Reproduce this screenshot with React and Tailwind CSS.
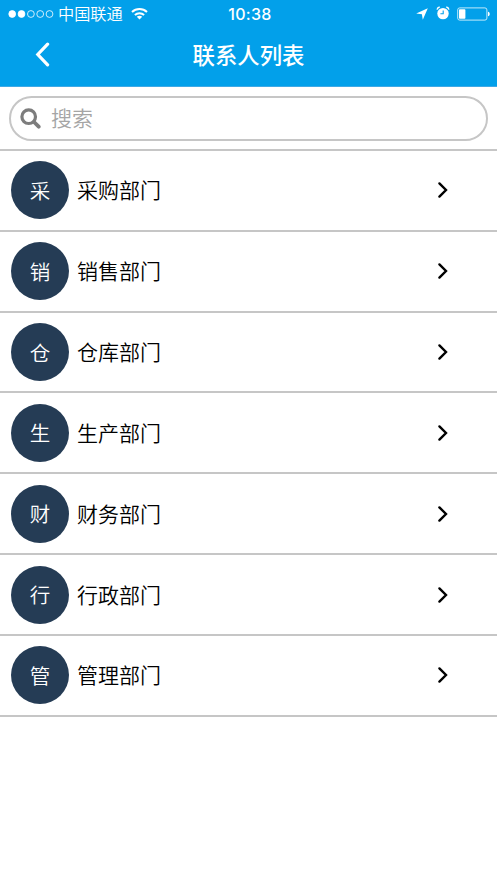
import React from 'react';

const departments = [
    { id: 1, badge: '采', name: '采购部门' },
    { id: 2, badge: '销', name: '销售部门' },
    { id: 3, badge: '仓', name: '仓库部门' },
    { id: 4, badge: '生', name: '生产部门' },
    { id: 5, badge: '财', name: '财务部门' },
    { id: 6, badge: '行', name: '行政部门' },
    { id: 7, badge: '管', name: '管理部门' },
];

function StatusBar() {
    return (
        <div className="grid h-[27px] grid-cols-[1fr_auto_1fr] items-center pl-[8px] pr-[7px]">
            <div className="flex items-center">
                <svg width="46" height="10" viewBox="0 0 46 10" fill="none" stroke="white" strokeWidth="0.8">
                    <circle cx="4.2" cy="5" r="3.4" fill="white" />
                    <circle cx="13.5" cy="5" r="3.4" fill="white" />
                    <circle cx="22.9" cy="5" r="3.4" />
                    <circle cx="32.2" cy="5" r="3.4" />
                    <circle cx="41.5" cy="5" r="3.4" />
                </svg>
                <span className="ml-[4px] text-[16.2px] leading-[27px] font-[350] whitespace-nowrap">中国联通</span>
                <svg className="ml-[8px] -mt-px" width="17" height="13" viewBox="0 0 17 13" fill="none" stroke="white" strokeWidth="2">
                    <path d="M1 5C5.2 1 11.8 1 16 5" />
                    <path d="M3.9 8C6.5 5.5 10.5 5.5 13.1 8" />
                    <path d="M8.5 12.6L5.8 9.8C7.3 8.5 9.7 8.5 11.2 9.8Z" fill="white" stroke="none" />
                </svg>
            </div>
            <span className="mt-px ml-[2px] font-['Inter','Noto_Sans_CJK_SC',sans-serif] text-[16px] font-medium tracking-[0.3px]">10:38</span>
            <div className="flex items-center justify-end">
                <svg width="12" height="12" viewBox="0 0 12 12" fill="white">
                    <path d="M11.8 0.2L6.8 11.8L5.9 6.3L0.2 5.6Z" />
                </svg>
                <svg className="ml-[8px] -mt-px" width="14" height="14" viewBox="0 0 14 14" fill="none" stroke="white">
                    <circle cx="7" cy="7.6" r="5.7" fill="white" stroke="none" />
                    <path d="M1 3.7C1.3 2.3 2.3 1.3 3.7 1M13 3.7C12.7 2.3 11.7 1.3 10.3 1" strokeWidth="1.3" />
                    <path d="M7.2 4.4V7.8H4.4" stroke="#02a0ea" strokeWidth="1.1" />
                </svg>
                <svg className="ml-[7px]" width="33" height="14" viewBox="0 0 33 14" fill="none">
                    <rect x="0.7" y="0.9" width="29.2" height="12.2" rx="2" stroke="#d8f2fd" strokeWidth="0.9" />
                    <rect x="2" y="2.2" width="6.4" height="9.6" rx="0.8" fill="white" />
                    <path d="M31 4.8C33.3 5.2 33.3 8.8 31 9.2Z" fill="white" />
                </svg>
            </div>
        </div>
    );
}

function Header() {
    return (
        <header className="h-[87px] border-b border-[#3fa9e5] bg-[#02a0ea] text-white">
            <StatusBar />
            <div className="grid h-[56px] grid-cols-[84px_1fr_84px] items-center">
                <button type="button" aria-label="返回" className="pb-px pl-[35px]">
                    <svg width="15" height="25" viewBox="0 0 15 25" fill="none" stroke="white" strokeWidth="3.2" strokeLinecap="round" strokeLinejoin="miter">
                        <path d="M12.6 2.2L2.8 12.5L12.6 22.8" />
                    </svg>
                </button>
                <h1 className="pb-[3px] text-center text-[22.4px] leading-[32px] font-medium">联系人列表</h1>
            </div>
        </header>
    );
}

function SearchBar() {
    return (
        <div className="h-[62px] px-[9px] pt-[9px]">
            <label className="flex h-[45px] items-center rounded-full border-2 border-[#c6c6c6] pl-[9px]">
                <svg className="-mt-px shrink-0" width="21" height="21" viewBox="0 0 21 21" fill="none" stroke="#7d7d7d" strokeLinecap="round">
                    <circle cx="8.7" cy="8.7" r="6.8" strokeWidth="3.2" />
                    <path d="M14 14L18.7 18.7" strokeWidth="3.8" />
                </svg>
                <span className="ml-[10px] pb-[4px] text-[21px] leading-[30px] font-[350] text-[#a5a5a5]">搜索</span>
            </label>
        </div>
    );
}

function DepartmentRow({ badge, name }) {
    return (
        <li className="flex h-[80.83px] items-center border-b-2 border-[#c6c6c6] pl-[11px] pr-[48px]">
            <div className="flex size-[58px] shrink-0 items-center justify-center rounded-full bg-[#253c55] pb-px text-[20.5px] leading-[30px] font-[350] text-white">
                {badge}
            </div>
            <span className="ml-[8px] flex-1 pb-[2px] text-[21px] leading-[30px] font-[350] text-black">{name}</span>
            <svg width="12" height="18" viewBox="0 0 12 18" fill="none" stroke="black" strokeWidth="2.4" strokeLinecap="round">
                <path d="M2.4 2.4L9 9L2.4 15.6" />
            </svg>
        </li>
    );
}

export default function App() {
    return (
        <div className="min-h-screen bg-white font-['Noto_Sans_CJK_SC',sans-serif]">
            <Header />
            <SearchBar />
            <ul className="border-t-2 border-[#c6c6c6]">
                {departments.map((item) => (
                    <DepartmentRow key={item.id} badge={item.badge} name={item.name} />
                ))}
            </ul>
        </div>
    );
}
